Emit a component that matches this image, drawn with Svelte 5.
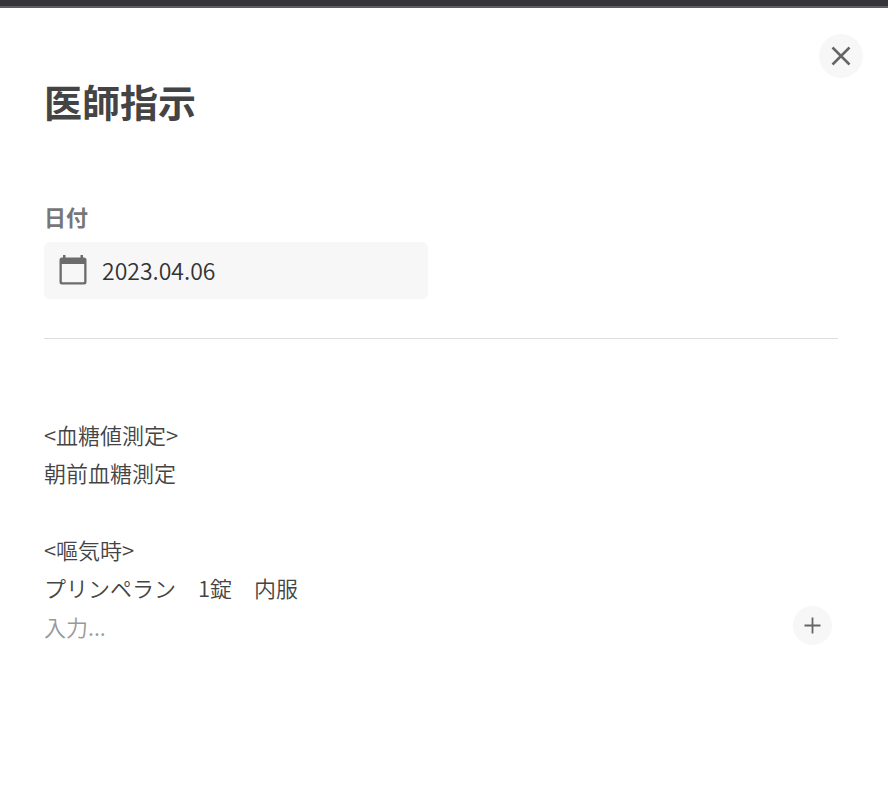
<script>
    let date = $state('2023.04.06');
    let note = $state('');

    const groups = [
        ['<血糖値測定>', '朝前血糖測定'],
        ['<嘔気時>', 'プリンペラン　1錠　内服']
    ];
</script>

<div class="backdrop">
    <main class="dialog">
        <div class="toolbar">
            <button type="button" class="close" aria-label="閉じる">
                <svg width="20" height="20" viewBox="0 0 20 20" stroke-width="2.5">
                    <path d="M1.5 1.5L18.5 18.5M18.5 1.5L1.5 18.5" />
                </svg>
            </button>
        </div>

        <div class="content">
            <h1>医師指示</h1>

            <label for="date">日付</label>
            <div class="date-field">
                <svg width="28" height="30" viewBox="0 0 28 30">
                    <path fill-rule="evenodd" d="M4 0h2.5v2.5h15V0H24v2.5h1A2.500 2.500 0 0 1 27.500 5v22a2.500 2.500 0 0 1-2.500 2.500H3A2.500 2.500 0 0 1 .5 27V5A2.500 2.500 0 0 1 3 2.500h1zM2.800 9v17.500a.7 .7 0 0 0 .7 .7h21a.7 .7 0 0 0 .7-.7V9z" />
                </svg>
                <input type="text" id="date" bind:value={date} />
            </div>

            <hr />

            {#each groups as lines}
                <div class="group">
                    {#each lines as line}
                        <p>{line}</p>
                    {/each}
                </div>
            {/each}

            <form class="entry">
                <input type="text" placeholder="入力..." aria-label="入力" bind:value={note} />
                <button type="button" class="add" aria-label="追加">
                    <svg width="17" height="17" viewBox="0 0 17 17" stroke-width="1.8">
                        <path d="M8.5 .5V16.5M.5 8.5H16.5" />
                    </svg>
                </button>
            </form>
        </div>
    </main>
</div>

<style>
    :global(body) {
        background-color: #fff;
    }
    .backdrop {
        border-top: 6px solid #36363a;
        font-family: "Noto Sans CJK JP", sans-serif;
        font-weight: 350;
        color: #444;
    }
    .dialog {
        border-top: 2px solid #605e64;
    }
    .toolbar {
        display: flex;
        justify-content: flex-end;
        padding: 26px 25px 0;
    }
    button {
        display: flex;
        align-items: center;
        justify-content: center;
        padding: 0;
        border: none;
        border-radius: 50%;
        background-color: #f7f7f7;
        cursor: pointer;
    }
    button svg {
        fill: none;
        stroke: #666;
    }
    .close {
        width: 44px;
        height: 44px;
    }
    .content {
        padding: 0 50px 40px 44px;
    }
    h1 {
        margin: 0;
        font-size: 38px;
        line-height: 46px;
        font-weight: 700;
    }
    label {
        display: block;
        margin-top: 76px;
        font-size: 22px;
        line-height: 32px;
        font-weight: 700;
        color: #777;
    }
    .date-field {
        display: flex;
        align-items: center;
        gap: 15px;
        box-sizing: border-box;
        max-width: 384px;
        height: 57px;
        margin-top: 10px;
        padding: 0 15px 2px;
        border-radius: 6px;
        background-color: #f7f7f7;
    }
    .date-field svg {
        flex: none;
        fill: #6c6c6c;
    }
    input {
        flex: 1;
        min-width: 0;
        padding: 0;
        border: none;
        outline: none;
        background: transparent;
        font-family: inherit;
        font-size: 22px;
        font-weight: inherit;
        color: inherit;
    }
    .date-field input {
        font-size: 23px;
        color: #333;
    }
    hr {
        margin: 39px 0 76px;
        border: none;
        border-top: 1px solid #ddd;
    }
    p {
        margin: 0;
        font-size: 22px;
        line-height: 38px;
    }
    .group + .group {
        margin-top: 39px;
    }
    .entry {
        display: flex;
        align-items: center;
        padding-right: 6px;
    }
    .entry input::placeholder {
        color: #999;
        opacity: 1;
    }
    .add {
        width: 39px;
        height: 39px;
    }
</style>
